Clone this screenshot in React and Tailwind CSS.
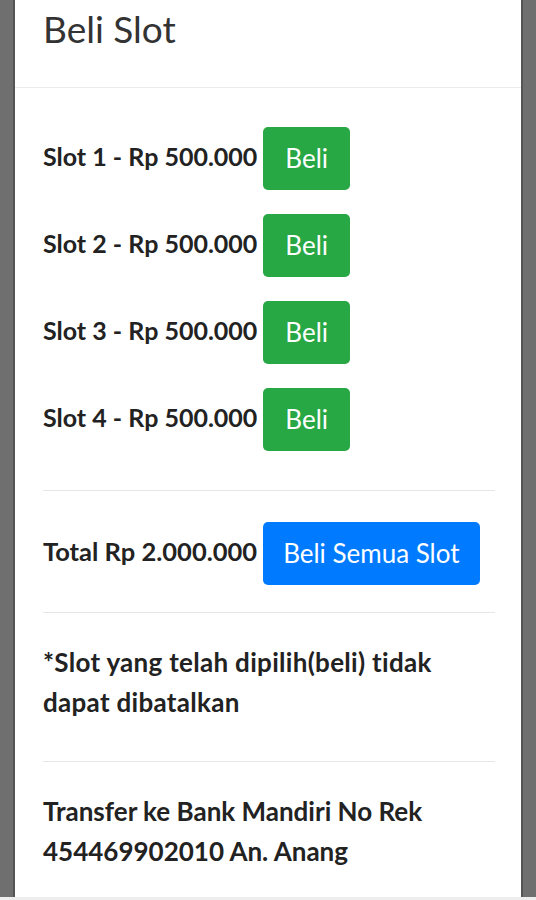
import React from 'react';

const slots = [1, 2, 3, 4];

const App = () => {
  return (
    <div className="min-h-[900px] w-full bg-[#6f6f6f] px-[13px] flex flex-col" style={{ fontFamily: 'Lato, "Noto Sans", sans-serif' }}>
      <div className="flex-1 bg-white border-x-2 border-[#555] flex flex-col">
        {/* Header */}
        <div className="h-[88px] border-b border-[#ececec] px-[28px] flex items-start">
          <h1 className="text-[37px] leading-[58px] text-[#333] font-normal">Beli Slot</h1>
        </div>

        {/* Body */}
        <div className="flex-1 pl-[28px] pr-[26px] pt-[39px] text-[#222]">
          <div className="flex flex-col gap-[24px]">
            {slots.map((n) => (
              <div key={n} className="flex items-center gap-[6px]">
                <span className="text-[25px] font-bold -mt-[4px]">Slot {n} - Rp 500.000</span>
                <button className="h-[63px] px-[22px] rounded-[5px] bg-[#28a745] text-white text-[26px]">Beli</button>
              </div>
            ))}
          </div>

          <div className="mt-[39px] border-t border-[#e6e6e6]" />

          <div className="pt-[31px] pb-[27px] flex items-center gap-[6px]">
            <span className="text-[25.5px] font-bold -mt-[4px]">Total Rp 2.000.000</span>
            <button className="h-[63px] px-[20px] rounded-[5px] bg-[#007bff] text-white text-[26px]">Beli Semua Slot</button>
          </div>

          <div className="border-t border-[#e6e6e6]" />

          <p className="pt-[29px] pb-[39px] text-[26px] leading-[40px] font-bold tracking-[0.3px]">
            *Slot yang telah dipilih(beli) tidak dapat dibatalkan
          </p>

          <div className="border-t border-[#e6e6e6]" />

          <p className="pt-[29px] text-[26px] leading-[40px] font-bold">
            Transfer ke Bank Mandiri No Rek 454469902010 An. Anang
          </p>
        </div>
      </div>
      <div className="h-[3px] -mx-[13px] bg-[#eeeeee]" />
    </div>
  );
};

export default App;
